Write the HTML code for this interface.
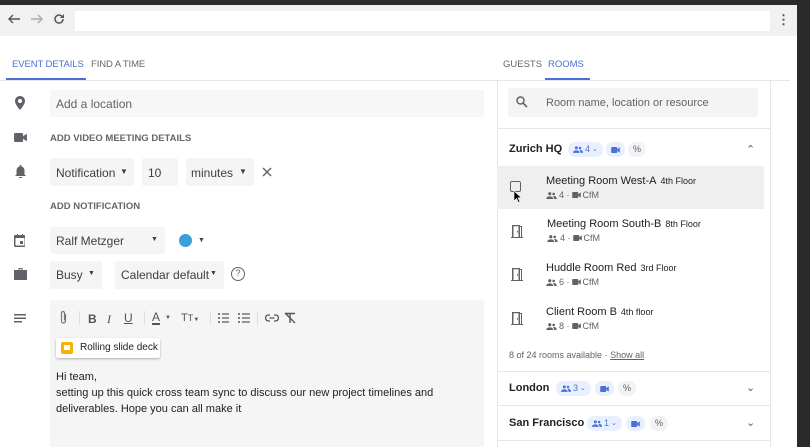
<!DOCTYPE html>
<html><head><style>
*{box-sizing:border-box;margin:0;padding:0}
body{width:810px;height:447px;overflow:hidden;background:#2b2b2b;font-family:"Liberation Sans",sans-serif;color:#3c4043;position:relative}
.abs{position:absolute}
.t{position:absolute;white-space:nowrap}
.bar{left:0;top:5px;width:797px;height:31px;background:#f1f1f1}
.page{left:0;top:36px;width:797px;height:411px;background:#fff}
.fld{position:absolute;background:#f5f5f5;border-radius:2px}
.cap{font-size:9.5px;font-weight:bold;color:#666}
.ic{position:absolute;fill:#5f6368}
.chip{position:absolute;height:15px;border-radius:7px;background:#e8f0fe;color:#4a6fd6;font-size:9px;line-height:15px;padding:0 5px;display:flex;align-items:center;gap:2px}
.chip svg{fill:#4a6fd6}
.gchip{background:#f1f3f4;color:#5f6368}
.rt{font-size:11px;color:#202124}
.rt small{font-size:9px;margin-left:4px}
.rs{font-size:9px;color:#5f6368;display:flex;align-items:center;gap:2px}
.rs svg{fill:#5f6368}
.hd{font-size:11px;font-weight:bold;color:#202124}
</style></head><body>
<svg width="0" height="0" style="position:absolute"><defs>
<symbol id="ppl" viewBox="0 0 12 8"><circle cx="4" cy="2" r="1.8"/><circle cx="8.5" cy="2.2" r="1.5"/><path d="M0 8c0-2 1.8-3 4-3s4 1 4 3zM8.5 4.5c1.8 0 3.5.8 3.5 3.5H9c0-1.5-.5-2.5-1.3-3.3z"/></symbol>
<symbol id="cam" viewBox="0 0 10 7"><rect width="7" height="7" rx="1"/><path d="M7 2.5L10 .5v6L7 4.5z"/></symbol>
<symbol id="door" viewBox="0 0 12 13"><path d="M0 12h1V0h8v1h2v11h1v1H0zM2.5 1.2v10.8h5V1.2zM9 2v10h1V2zM6 6h1v1.5H6z"/></symbol>
</defs></svg>
<div class="abs bar"></div>
<svg class="abs" style="left:8px;top:14px" width="12" height="10" viewBox="0 0 12 10"><path d="M5 1L1 5l4 4M1 5h11" stroke="#555" stroke-width="1.4" fill="none"/></svg>
<svg class="abs" style="left:31px;top:14px" width="12" height="10" viewBox="0 0 12 10"><path d="M7 1l4 4-4 4M11 5H0" stroke="#aaa" stroke-width="1.4" fill="none"/></svg>
<svg class="abs" style="left:53px;top:13px" width="12" height="12" viewBox="0 0 12 12"><path d="M10 6a4 4 0 11-1.2-2.8" stroke="#555" stroke-width="1.5" fill="none"/><path d="M11 1v4H7z" fill="#555"/></svg>
<div class="abs" style="left:75px;top:11px;width:695px;height:20px;background:#fff"></div>
<div class="t" style="left:777px;top:12px;font-size:13px;font-weight:bold;color:#555">&#8942;</div>
<div class="abs page"></div>
<div class="abs" style="left:797px;top:0;width:13px;height:447px;background:#2b2b2b"></div>

<div class="t cap" style="left:12px;top:59px;color:#4a6fd6;font-weight:normal;letter-spacing:-.1px">EVENT DETAILS</div>
<div class="t cap" style="left:91px;top:59px;font-weight:normal;letter-spacing:-.1px">FIND A TIME</div>
<div class="abs" style="left:6px;top:78px;width:80px;height:2px;background:#4a6fd6"></div>
<div class="t cap" style="left:503px;top:59px;font-weight:normal">GUESTS</div>
<div class="t cap" style="left:548px;top:59px;color:#4a6fd6;font-weight:normal">ROOMS</div>
<div class="abs" style="left:545px;top:78px;width:45px;height:2px;background:#4a6fd6"></div>
<div class="abs" style="left:0;top:80px;width:790px;height:1px;background:#e6e6e6"></div>

<!-- left -->
<svg class="ic" style="left:14px;top:96px" width="12" height="14" viewBox="0 0 12 14"><path d="M6 0C3 0 1 2.2 1 5c0 3.5 5 9 5 9s5-5.5 5-9C11 2.2 9 0 6 0zm0 7a2 2 0 110-4 2 2 0 010 4z"/></svg>
<div class="fld" style="left:50px;top:90px;width:434px;height:27px;background:#f7f7f7"></div>
<div class="t" style="left:56px;top:97px;font-size:12px;color:#5f6368">Add a location</div>
<svg class="ic" style="left:14px;top:133px" width="13" height="9"><use href="#cam"/></svg>
<div class="t cap" style="left:50px;top:133px">ADD VIDEO MEETING DETAILS</div>
<svg class="ic" style="left:15px;top:165px" width="11" height="13" viewBox="0 0 11 13"><path d="M5.5 0C4.8 0 4.5.5 4.5 1v.5C2.5 2 1.5 3.5 1.5 6v3.5L0 11h11l-1.5-1.5V6c0-2.5-1-4-3-4.5V1c0-.5-.3-1-1-1zM4 12h3a1.5 1.5 0 01-3 0z"/></svg>
<div class="fld" style="left:50px;top:158px;width:84px;height:28px"></div>
<div class="t" style="left:56px;top:166px;font-size:12px">Notification</div>
<div class="t" style="left:120px;top:167px;font-size:8px">&#9660;</div>
<div class="fld" style="left:142px;top:158px;width:36px;height:28px"></div>
<div class="t" style="left:148px;top:166px;font-size:12px">10</div>
<div class="fld" style="left:186px;top:158px;width:68px;height:28px"></div>
<div class="t" style="left:191px;top:166px;font-size:12px">minutes</div>
<div class="t" style="left:239px;top:167px;font-size:8px">&#9660;</div>
<svg class="abs" style="left:262px;top:167px" width="10" height="10"><path d="M1 1l8 8M9 1L1 9" stroke="#5f6368" stroke-width="1.4"/></svg>
<div class="t cap" style="left:50px;top:201px">ADD NOTIFICATION</div>

<svg class="ic" style="left:14px;top:234px" width="12" height="13" viewBox="0 0 12 13"><path d="M2 1h1V0h1v1h4V0h1v1h1a1 1 0 011 1v10a1 1 0 01-1 1H1a1 1 0 01-1-1V2a1 1 0 011-1zm-0.5 3v7.5h9V4zM6 7h3v3H6z"/></svg>
<div class="fld" style="left:50px;top:227px;width:115px;height:27px"></div>
<div class="t" style="left:56px;top:234px;font-size:12px">Ralf Metzger</div>
<div class="t" style="left:151px;top:236px;font-size:7px">&#9660;</div>
<div class="abs" style="left:179px;top:234px;width:13px;height:13px;border-radius:50%;background:#3aa0dc"></div>
<div class="t" style="left:198px;top:237px;font-size:7px">&#9660;</div>
<svg class="ic" style="left:14px;top:268px" width="13" height="12" viewBox="0 0 13 12"><path d="M4.5 0h4v2H13v10H0V2h4.5zm1 1v1h2V1z"/></svg>
<div class="fld" style="left:50px;top:261px;width:52px;height:28px"></div>
<div class="t" style="left:56px;top:268px;font-size:12px">Busy</div>
<div class="t" style="left:88px;top:270px;font-size:7px">&#9660;</div>
<div class="fld" style="left:115px;top:261px;width:109px;height:28px"></div>
<div class="t" style="left:121px;top:268px;font-size:12px">Calendar default</div>
<div class="t" style="left:210px;top:270px;font-size:7px">&#9660;</div>
<div class="abs" style="left:231px;top:267px;width:14px;height:14px;border:1.5px solid #5f6368;border-radius:50%;font-size:9px;text-align:center;line-height:11px;color:#5f6368">?</div>
<svg class="ic" style="left:14px;top:314px" width="12" height="9"><rect width="12" height="1.5"/><rect y="3.5" width="12" height="1.5"/><rect y="7" width="8" height="1.5"/></svg>
<div class="fld" style="left:50px;top:300px;width:434px;height:147px"></div>
<svg class="abs" style="left:59px;top:310px" width="9" height="15" viewBox="0 0 9 15"><path d="M6.5 4v7a2 2 0 01-4 0V3a1.5 1.5 0 013 0v7.5" stroke="#777" stroke-width="1.2" fill="none"/></svg>
<div class="t" style="left:88px;top:312px;font-size:12px;font-weight:bold;color:#555">B</div>
<div class="t" style="left:107px;top:312px;font-size:12px;font-style:italic;font-family:'Liberation Serif';color:#555">I</div>
<div class="t" style="left:124px;top:311px;font-size:12px;text-decoration:underline;color:#555">U</div>
<div class="t" style="left:152px;top:311px;font-size:12px;color:#555;border-bottom:2px solid #555;line-height:12px">A</div>
<div class="t" style="left:165px;top:315px;font-size:6px;color:#555">&#9660;</div>
<div class="t" style="left:181px;top:312px;font-size:11px;color:#555">T<small>T</small><span style="font-size:6px">&#9660;</span></div>
<svg class="abs" style="left:218px;top:312px" width="36" height="12" fill="#555"><circle cx="1" cy="2" r="1"/><circle cx="1" cy="6" r="1"/><circle cx="1" cy="10" r="1"/><rect x="4" y="1.4" width="7" height="1.2"/><rect x="4" y="5.4" width="7" height="1.2"/><rect x="4" y="9.4" width="7" height="1.2"/><circle cx="21" cy="2" r="1"/><circle cx="21" cy="6" r="1"/><circle cx="21" cy="10" r="1"/><rect x="24" y="1.4" width="8" height="1.2"/><rect x="24" y="5.4" width="8" height="1.2"/><rect x="24" y="9.4" width="8" height="1.2"/></svg>
<svg class="abs" style="left:265px;top:314px" width="14" height="8"><path d="M5 1H3.5a3 3 0 000 6H5M9 1h1.5a3 3 0 010 6H9M4.5 4h5" stroke="#555" stroke-width="1.3" fill="none"/></svg>
<svg class="abs" style="left:284px;top:312px" width="13" height="12"><path d="M1 1.5h10M6 1.5V11M1 1l10 10" stroke="#555" stroke-width="1.4" fill="none"/></svg>
<div class="abs" style="left:79px;top:311px;width:1px;height:14px;background:#ddd"></div>
<div class="abs" style="left:144px;top:311px;width:1px;height:14px;background:#ddd"></div>
<div class="abs" style="left:210px;top:311px;width:1px;height:14px;background:#ddd"></div>
<div class="abs" style="left:257px;top:311px;width:1px;height:14px;background:#ddd"></div>
<div class="abs" style="left:56px;top:338px;width:104px;height:20px;background:#fff;box-shadow:0 1px 2px rgba(0,0,0,.3);border-radius:2px"></div>
<div class="abs" style="left:61px;top:342px;width:12px;height:12px;background:#f4b400;border-radius:2px"><div class="abs" style="left:3px;top:3px;width:6px;height:5px;background:#fff"></div></div>
<div class="t" style="left:80px;top:342px;font-size:10px;color:#202124">Rolling slide deck</div>
<div class="t" style="left:56px;top:369px;font-size:11px;line-height:16px;color:#202124">Hi team,<br>setting up this quick cross team sync to discuss our new project timelines and<br>deliverables. Hope you can all make it</div>

<!-- right panel -->
<div class="abs" style="left:497px;top:80px;width:274px;height:367px;border-left:1px solid #e6e6e6;border-right:1px solid #e6e6e6"></div>
<div class="fld" style="left:508px;top:88px;width:250px;height:29px;background:#f4f4f4"></div>
<svg class="abs" style="left:516px;top:96px" width="12" height="12"><circle cx="4.5" cy="4.5" r="3.5" stroke="#5f6368" stroke-width="1.5" fill="none"/><path d="M7 7l4 4" stroke="#5f6368" stroke-width="1.6"/></svg>
<div class="t" style="left:546px;top:97px;font-size:11px;color:#5f6368">Room name, location or resource</div>
<div class="abs" style="left:497px;top:128px;width:274px;height:1px;background:#e6e6e6"></div>
<div class="t hd" style="left:509px;top:143px">Zurich HQ</div>
<div class="chip" style="left:568px;top:142px"><svg width="10" height="7"><use href="#ppl"/></svg>4 <span style="font-size:7px">&#8964;</span></div>
<div class="chip" style="left:606px;top:142px"><svg width="9" height="6"><use href="#cam"/></svg></div>
<div class="chip gchip" style="left:628px;top:142px">%</div>
<div class="t" style="left:746px;top:143px;font-size:11px;color:#5f6368">&#8963;</div>
<div class="abs" style="left:497px;top:166px;width:267px;height:43px;background:#efefef"></div>
<div class="abs" style="left:510px;top:181px;width:11px;height:11px;border:1.5px solid #5f6368;border-radius:2px"></div>
<svg class="abs" style="left:514px;top:191px" width="8" height="12"><path d="M0 0v10l2.5-2.5L4.5 11.5l1.5-.8L4 6.8h3.5z" fill="#000" stroke="#fff" stroke-width=".6"/></svg>
<div class="t rt" style="left:546px;top:175px">Meeting Room West-A<small>4th Floor</small></div>
<div class="t rs" style="left:546px;top:190px"><svg width="11" height="7"><use href="#ppl"/></svg> 4 · <svg width="9" height="6"><use href="#cam"/></svg> CfM</div>
<svg class="ic" style="left:511px;top:225px" width="12" height="13"><use href="#door"/></svg>
<div class="t rt" style="left:547px;top:218px">Meeting Room South-B<small>8th Floor</small></div>
<div class="t rs" style="left:547px;top:233px"><svg width="11" height="7"><use href="#ppl"/></svg> 4 · <svg width="9" height="6"><use href="#cam"/></svg> CfM</div>
<svg class="ic" style="left:511px;top:268px" width="12" height="13"><use href="#door"/></svg>
<div class="t rt" style="left:546px;top:262px">Huddle Room Red<small>3rd Floor</small></div>
<div class="t rs" style="left:546px;top:277px"><svg width="11" height="7"><use href="#ppl"/></svg> 6 · <svg width="9" height="6"><use href="#cam"/></svg> CfM</div>
<svg class="ic" style="left:511px;top:312px" width="12" height="13"><use href="#door"/></svg>
<div class="t rt" style="left:546px;top:306px">Client Room B<small>4th floor</small></div>
<div class="t rs" style="left:546px;top:321px"><svg width="11" height="7"><use href="#ppl"/></svg> 8 · <svg width="9" height="6"><use href="#cam"/></svg> CfM</div>
<div class="t" style="left:509px;top:350px;font-size:9px;color:#5f6368">8 of 24 rooms available · <u>Show all</u></div>
<div class="abs" style="left:497px;top:371px;width:274px;height:1px;background:#e6e6e6"></div>
<div class="t hd" style="left:509px;top:382px">London</div>
<div class="chip" style="left:556px;top:381px"><svg width="10" height="7"><use href="#ppl"/></svg>3 <span style="font-size:7px">&#8964;</span></div>
<div class="chip" style="left:595px;top:381px"><svg width="9" height="6"><use href="#cam"/></svg></div>
<div class="chip gchip" style="left:618px;top:381px">%</div>
<div class="t" style="left:746px;top:381px;font-size:11px;color:#5f6368">&#8964;</div>
<div class="abs" style="left:497px;top:405px;width:274px;height:1px;background:#e6e6e6"></div>
<div class="t hd" style="left:509px;top:417px">San Francisco</div>
<div class="chip" style="left:587px;top:416px"><svg width="10" height="7"><use href="#ppl"/></svg>1 <span style="font-size:7px">&#8964;</span></div>
<div class="chip" style="left:626px;top:416px"><svg width="9" height="6"><use href="#cam"/></svg></div>
<div class="chip gchip" style="left:650px;top:416px">%</div>
<div class="t" style="left:746px;top:416px;font-size:11px;color:#5f6368">&#8964;</div>
<div class="abs" style="left:497px;top:440px;width:274px;height:1px;background:#e6e6e6"></div>
</body></html>
